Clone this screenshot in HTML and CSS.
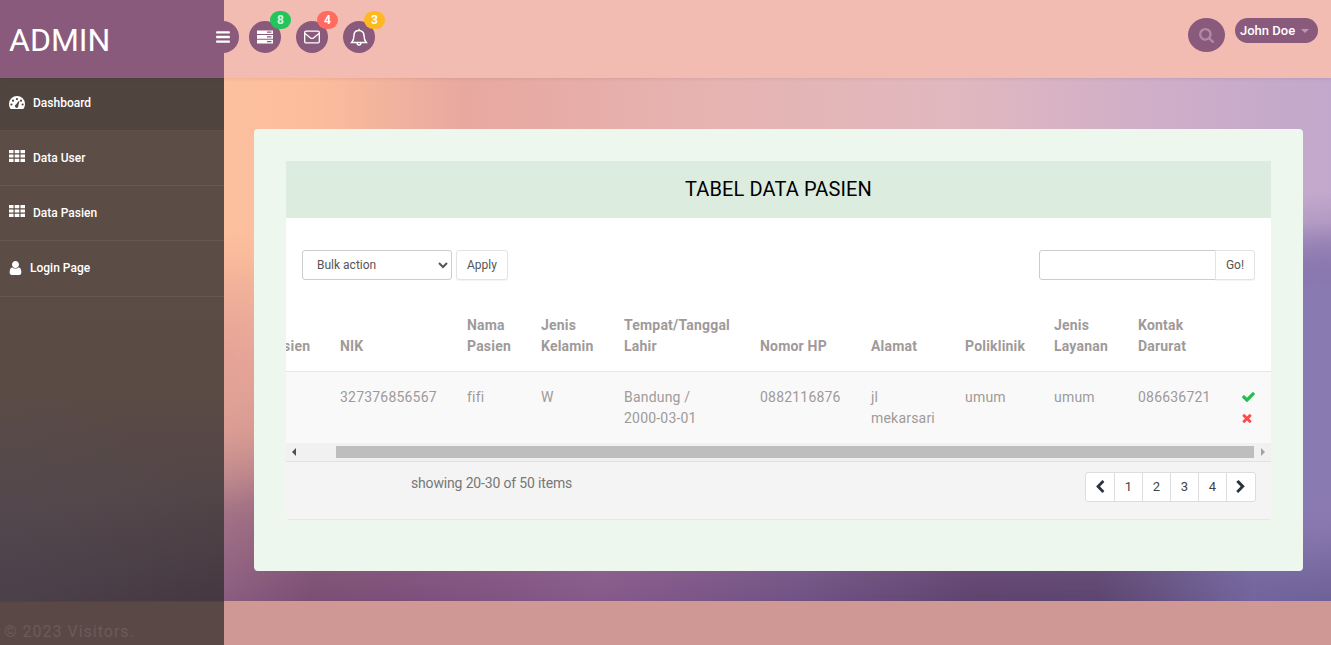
FILE: index.html
```html
<!DOCTYPE html>
<html lang="id">
<head>
<meta charset="utf-8">
<title>Tabel Data Pasien</title>
<link rel="stylesheet" href="styles.css">
</head>
<body>
<div class="app">
  <header class="topbar">
    <div class="brand">ADMIN</div>
    <nav class="quick">
      <button class="round round-menu"><svg class="ic-bars" viewBox="0 0 1536 1792"><path d="M1536 1344v128q0 26-19 45t-45 19H64q-26 0-45-19t-19-45v-128q0-26 19-45t45-19h1408q26 0 45 19t19 45zm0-512v128q0 26-19 45t-45 19H64q-26 0-45-19t-19-45V832q0-26 19-45t45-19h1408q26 0 45 19t19 45zm0-512v128q0 26-19 45t-45 19H64q-26 0-45-19T0 448V320q0-26 19-45t45-19h1408q26 0 45 19t19 45z"/></svg></button>
      <button class="round"><svg class="ic-16" viewBox="0 0 16 14"><path fill-rule="evenodd" d="M0 0.5h16v3.6H0zM10 1.6v1.2h4.500V1.600zM0 5.100h16v3.600H0zM10 6.300v1.200h4.500V6.300zM0 9.700h16v3.800H0zM10 11v1.200h4.500V11z"/></svg><span class="badge badge-green">8</span></button>
      <button class="round"><svg class="ic-16 ic-line" viewBox="0 0 16 14"><rect x="0.700" y="1.200" width="14.600" height="11.600" rx="1.300"/><path d="M1 3.500l5.500 4.400q1.500 1.100 3 0L15 3.500"/></svg><span class="badge badge-red">4</span></button>
      <button class="round"><svg class="ic-bell ic-line" viewBox="0 0 16 16"><path d="M8 2.200c-2.800 0-4.500 2-4.500 4.600 0 3.200-.7 4.600-2 6h13c-1.300-1.400-2-2.800-2-6 0-2.600-1.700-4.600-4.500-4.600zM8 .6v1.600M6.300 13.200c0 1.200.8 2 1.700 2s1.700-.8 1.700-2"/></svg><span class="badge badge-amber">3</span></button>
    </nav>
    <div class="account">
      <button class="round round-search"><svg class="ic-search" viewBox="0 0 1664 1664"><path transform="translate(-64 -128)" d="M1216 832q0-185-131.500-316.500T768 384 451.500 515.500 320 832t131.500 316.500T768 1280t316.500-131.500T1216 832zm512 832q0 52-38 90t-90 38q-54 0-90-38l-343-342q-179 124-399 124-143 0-273.500-55.500t-225-150-150-225T64 832t55.500-273.500 150-225 225-150T768 128t273.500 55.500 225 150 150 225T1472 832q0 220-124 399l343 343q37 37 37 90z"/></svg></button>
      <button class="user-pill">John Doe<span class="caret"></span></button>
    </div>
  </header>

  <aside class="sidebar">
    <ul class="menu">
      <li class="menu-item menu-item-active"><svg class="ic-menu" viewBox="0 0 16 13"><path fill-rule="evenodd" d="M8 0a8 8 0 0 1 8 8c0 1.800-.6 3.500-1.500 4.800-.2.200-.4.200-.6.200H2.100c-.2 0-.4 0-.6-.2C.6 11.500 0 9.800 0 8a8 8 0 0 1 8-8zM8 2a1.100 1.100 0 1 0 0 2.200A1.100 1.100 0 0 0 8 2zM4 3.600a1.100 1.100 0 1 0 0 2.200 1.100 1.100 0 0 0 0-2.200zM12 3.600a1.100 1.100 0 1 0 0 2.200 1.100 1.100 0 0 0 0-2.200zM2.400 7.400a1.100 1.100 0 1 0 0 2.200 1.100 1.100 0 0 0 0-2.200zM13.600 7.400a1.100 1.100 0 1 0 0 2.200 1.100 1.100 0 0 0 0-2.200zM9.700 5L7 8.600a1.700 1.700 0 1 0 2.300 1.100L10.500 5.300z"/></svg>Dashboard</li>
      <li class="menu-item"><svg class="ic-menu" viewBox="0 0 16 12"><path d="M0 0h4.500v3.300H0zM5.700 0h4.600v3.300H5.700zM11.500 0H16v3.300h-4.500zM0 4.400h4.500v3.200H0zM5.700 4.400h4.600v3.200H5.700zM11.500 4.400H16v3.200h-4.500zM0 8.700h4.500V12H0zM5.700 8.700h4.600V12H5.700zM11.500 8.700H16V12h-4.500z"/></svg>Data User</li>
      <li class="menu-item"><svg class="ic-menu" viewBox="0 0 16 12"><path d="M0 0h4.500v3.300H0zM5.700 0h4.600v3.300H5.700zM11.500 0H16v3.300h-4.500zM0 4.400h4.500v3.200H0zM5.700 4.400h4.600v3.200H5.700zM11.500 4.400H16v3.200h-4.500zM0 8.700h4.500V12H0zM5.700 8.700h4.600V12H5.700zM11.500 8.700H16V12h-4.500z"/></svg>Data Pasien</li>
      <li class="menu-item menu-item-user"><svg class="ic-user" viewBox="256 128 1280 1536"><path d="M1536 1399q0 109-62.500 187t-150.500 78H469q-88 0-150.500-78T256 1399q0-85 8.500-160.500t31.500-152 58.500-131 94-89T583 832q131 128 313 128t313-128q76 0 134.500 34.500t94 89 58.500 131 31.500 152 8.500 160.500zm-256-887q0 159-112.500 271.500T896 896 624.500 783.500 512 512t112.500-271.500T896 128t271.500 112.500T1280 512z"/></svg>Login Page</li>
    </ul>
  </aside>

  <main class="content">
    <section class="card">
      <h1 class="card-title">TABEL DATA PASIEN</h1>
      <div class="card-body">
        <div class="toolbar">
          <div class="tool-group">
            <select class="bulk-select"><option>Bulk action</option></select>
            <button class="btn">Apply</button>
          </div>
          <div class="search-group">
            <input class="search-input" type="text">
            <button class="btn btn-go">Go!</button>
          </div>
        </div>
        <div class="table-clip">
          <table class="data-table">
            <colgroup>
              <col class="c-id"><col class="c-nik"><col class="c-nama"><col class="c-jk"><col class="c-ttl"><col class="c-hp"><col class="c-alamat"><col class="c-poli"><col class="c-layanan"><col class="c-kontak"><col class="c-aksi">
            </colgroup>
            <thead>
              <tr>
                <th class="cell-id">ID Pasien</th><th>NIK</th><th>Nama Pasien</th><th>Jenis Kelamin</th><th>Tempat/Tanggal Lahir</th><th>Nomor HP</th><th>Alamat</th><th>Poliklinik</th><th>Jenis Layanan</th><th>Kontak Darurat</th><th></th>
              </tr>
            </thead>
            <tbody>
              <tr>
                <td class="cell-id">1</td><td>327376856567</td><td>fifi</td><td>W</td><td>Bandung / <span class="nowrap">2000-03-01</span></td><td>0882116876</td><td>jl mekarsari</td><td>umum</td><td>umum</td><td>086636721</td>
                <td class="cell-actions">
                  <svg class="ic-check" viewBox="128 320 1543 1200"><path d="M1671 566q0 40-28 68l-724 724-136 136q-28 28-68 28t-68-28l-136-136-362-362q-28-28-28-68t28-68l136-136q28-28 68-28t68 28l294 295 656-657q28-28 68-28t68 28l136 136q28 28 28 68z"/></svg>
                  <svg class="ic-times" viewBox="302 238 1188 1316"><path d="M1490 1322q0 40-28 68l-136 136q-28 28-68 28t-68-28l-294-294-294 294q-28 28-68 28t-68-28l-136-136q-28-28-28-68t28-68l294-294-294-294q-28-28-28-68t28-68l136-136q28-28 68-28t68 28l294 294 294-294q28-28 68-28t68 28l136 136q28 28 28 68t-28 68l-294 294 294 294q28 28 28 68z"/></svg>
                </td>
              </tr>
            </tbody>
          </table>
        </div>
        <div class="scrollbar">
          <span class="arrow arrow-left"></span>
          <span class="thumb"></span>
          <span class="arrow arrow-right"></span>
        </div>
        <div class="table-foot">
          <span class="foot-info">showing 20-30 of 50 items</span>
          <div class="pager">
            <a class="page page-arrow"><svg class="ic-chev" viewBox="0 0 1792 1792"><path d="M1427 301L896 832l531 531q19 19 19 45t-19 45l-166 166q-19 19-45 19t-45-19L429 877q-19-19-19-45t19-45l742-742q19-19 45-19t45 19l166 166q19 19 19 45t-19 45z"/></svg></a>
            <a class="page">1</a><a class="page">2</a><a class="page">3</a><a class="page">4</a>
            <a class="page page-arrow page-last"><svg class="ic-chev" viewBox="0 0 1792 1792"><path d="M1363 877l-742 742q-19 19-45 19t-45-19l-166-166q-19-19-19-45t19-45l531-531-531-531q-19-19-19-45t19-45L576 45q19-19 45-19t45 19l742 742q19 19 19 45t-19 45z" transform="translate(-45 0)"/></svg></a>
          </div>
        </div>
      </div>
    </section>
  </main>

  <div class="side-foot">© 2023 Visitors.</div>
  <footer class="main-foot"></footer>
</div>
</body>
</html>
```
FILE: styles.css
```css
* { box-sizing: border-box; }
html, body { margin: 0; height: 100%; }
body { font-family: Roboto, "Liberation Sans", sans-serif; font-size: 14px; overflow: hidden; }
button { font-family: inherit; border: 0; padding: 0; }

.app {
  display: grid;
  grid-template-columns: 224px minmax(0, 1fr);
  grid-template-rows: 78px 523px 44px;
  height: 645px;
}

/* top bar */
.topbar {
  grid-column: 1 / 3;
  display: flex;
  align-items: flex-start;
  background: #f2bcb3;
  box-shadow: 0 1px 3px rgba(0,0,0,.08);
  position: relative;
  z-index: 2;
}
.brand {
  width: 224px;
  height: 78px;
  padding: 19px 0 0 9px;
  background: #8a5a7c;
  color: #fff;
  font-size: 32px;
  line-height: 42px;
}
.quick { display: flex; gap: 15px; margin: 21px 0 0 -17px; }
.round {
  position: relative;
  width: 32px;
  height: 32px;
  border-radius: 50%;
  background: #8a5a7c;
  display: flex;
  align-items: center;
  justify-content: center;
}
.round-menu { margin-right: -5px; }
.round svg { fill: #fff; }
.ic-bars { width: 14px; height: 16px; }
.ic-16 { width: 16px; height: 16px; }
.ic-bell { width: 18px; height: 18px; }
.round svg.ic-line { fill: none; stroke: #fff; stroke-width: 1.300; }
.badge {
  position: absolute;
  top: -10px;
  left: 21px;
  min-width: 21px;
  height: 18px;
  border-radius: 10px;
  color: #fff;
  font-size: 12px;
  font-weight: 700;
  line-height: 18px;
  text-align: center;
}
.badge-green { background: #22c55a; color: #d8f5e0; }
.badge-red { background: #ff6b5e; }
.badge-amber { background: #ffb81f; }

.account { margin-left: auto; display: flex; gap: 10px; padding: 18px 13px 0 0; align-items: flex-start; }
.round-search { width: 37px; height: 34px; }
.round-search svg.ic-search { width: 15px; height: 15px; fill: #b08ba6; }
.user-pill {
  width: 83px;
  height: 25px;
  padding-left: 5px;
  border-radius: 13px;
  background: #8a5a7c;
  color: #fff;
  font-size: 13px;
  font-weight: 500;
  display: flex;
  align-items: center;
}
.caret {
  margin-left: 6px;
  border-left: 4px solid transparent;
  border-right: 4px solid transparent;
  border-top: 4px solid #b29ab0;
}

/* sidebar */
.sidebar {
  background:
    radial-gradient(ellipse 230px 220px at 0 100%, rgba(105,105,125,.18), rgba(105,105,125,0)),
    linear-gradient(180deg, #5c4d45 0, #5b4b45 60%, #524548 80%, #453740 100%);
}
.menu { list-style: none; margin: 0; padding: 0; }
.menu-item {
  height: 55px;
  display: flex;
  align-items: flex-start;
  padding: 20px 0 0 9px;
  border-bottom: 1px solid #6a5850;
  color: #fff;
  font-size: 12px;
  font-weight: 500;
  line-height: 15px;
}
.menu-item-active { height: 53px; padding-top: 17px; background: #50443f; border-bottom-color: #625047; line-height: 17px; }
.menu-item-user { height: 56px; }
.ic-menu { width: 16px; height: 12px; margin: -1px 8px 0 0; fill: #fff; flex: none; }
.menu-item-active .ic-menu { margin-top: 1px; height: 13px; }
.ic-user { width: 13px; height: 14px; margin: 0 8px 0 0; fill: #fff; flex: none; }

/* content */
.content {
  position: relative;
  padding: 51px 28px 30px 30px;
  background: linear-gradient(90deg, #fdc09e 0, #fcbd9c 8%, #e8a8a0 22%, #e6b4b2 45%, #e1b8bf 66%, #cfaec8 84%, #c2a8cc 100%);
  overflow: hidden;
}
.content::before {
  content: "";
  position: absolute;
  inset: 0;
  background: linear-gradient(90deg, #8a5d80 0, #7a4e74 8%, #7c4f7c 17%, #85598a 34%, #705285 52%, #5e436e 68%, #5c4570 79%, #72659d 93%, #6e6299 100%);
  -webkit-mask-image: linear-gradient(180deg, transparent 35%, rgba(0,0,0,.12) 50%, rgba(0,0,0,.4) 68%, rgba(0,0,0,.8) 84%, #000 100%);
  mask-image: linear-gradient(180deg, transparent 35%, rgba(0,0,0,.12) 50%, rgba(0,0,0,.4) 68%, rgba(0,0,0,.8) 84%, #000 100%);
}
.content::after {
  content: "";
  position: absolute;
  inset: 0;
  background:
    radial-gradient(ellipse 170px 215px at 100% 330px, #8a7ab2 0, #8a7ab2 55%, rgba(138,122,178,0) 100%),
    radial-gradient(ellipse 180px 60px at 100% 205px, #78609a 0, rgba(120,96,154,0) 100%),
    radial-gradient(ellipse 90px 140px at 0 290px, rgba(228,160,150,.85) 0, rgba(228,160,150,0) 100%);
  background-repeat: no-repeat;
  -webkit-mask-image: linear-gradient(180deg, #000 82%, transparent 100%);
  mask-image: linear-gradient(180deg, #000 82%, transparent 100%);
}
.card {
  position: relative;
  z-index: 1;
  height: 442px;
  padding: 32px;
  background: #edf7ee;
  border-radius: 4px;
}
.card-title {
  margin: 0;
  height: 57px;
  background: #dcede0;
  color: #000;
  font-size: 20px;
  font-weight: 400;
  letter-spacing: .12px;
  line-height: 57px;
  text-align: center;
}
.card-body { background: #fff; height: 302px; border-radius: 0 0 3px 3px; overflow: hidden; }
.toolbar { display: flex; justify-content: space-between; padding: 32px 16px 0; height: 82px; }
.tool-group { display: flex; gap: 4px; }
.search-group { display: flex; }
.bulk-select {
  width: 150px;
  height: 30px;
  padding-left: 10px;
  border: 1px solid #ccc;
  border-radius: 3px;
  background: #fff;
  color: #555;
  font: 12px Roboto, sans-serif;
}
.btn {
  height: 30px;
  padding: 0 10px;
  border: 1px solid #e1e4e6;
  border-radius: 3px;
  background: #fff;
  box-shadow: 0 1px 1px rgba(0,0,0,.05);
  color: #555;
  font-size: 12px;
}
.search-input {
  width: 177px;
  height: 30px;
  border: 1px solid #ccc;
  border-radius: 3px 0 0 3px;
  background: #fff;
}
.btn-go { width: 40px; margin-left: -1px; padding: 0; border-radius: 0 3px 3px 0; }

/* table */
.table-clip { overflow: hidden; height: 143px; }
.data-table {
  table-layout: fixed;
  width: 1042px;
  margin-left: -41px;
  border-collapse: collapse;
  color: #9f9a9a;
  line-height: 21px;
  letter-spacing: .2px;
}
.nowrap { white-space: nowrap; }
.c-id { width: 80px; }
.c-nik { width: 127px; }
.c-nama { width: 74px; }
.c-jk { width: 83px; }
.c-ttl { width: 136px; }
.c-hp { width: 111px; }
.c-alamat { width: 94px; }
.c-poli { width: 89px; }
.c-layanan { width: 84px; }
.c-kontak { width: 104px; }
.c-aksi { width: 60px; }
.data-table th {
  padding: 15px 8px 14px 15px;
  text-align: left;
  vertical-align: bottom;
  font-weight: 700;
  border-bottom: 1px solid #e6e6e6;
}
.data-table td { padding: 14.500px 8px 14.500px 15px; vertical-align: top; background: #f9f9f9; }
.data-table td:nth-child(5) { padding-right: 15px; }
.data-table .cell-id { padding-left: 4px; padding-right: 0; white-space: nowrap; }
.cell-actions svg { display: block; }
.ic-check { width: 13px; height: 10px; margin: 5px 0 0; fill: #22c04f; }
.ic-times { width: 10px; height: 10px; margin: 11px 0 0 0; fill: #ff4a4a; }

/* drawn scrollbar */
.scrollbar {
  position: relative;
  display: flex;
  align-items: center;
  height: 19px;
  padding-left: 50px;
  padding-right: 17px;
  background: #f1f1f1;
  border-bottom: 1px solid #e2e2e2;
}
.thumb { flex: 1; height: 12px; background: #bebebe; }
.arrow { position: absolute; top: 5px; border-top: 4px solid transparent; border-bottom: 4px solid transparent; }
.arrow-left { left: 6px; border-right: 4px solid #505050; }
.arrow-right { right: 6px; border-left: 4px solid #a3a3a3; }

.table-foot {
  display: flex;
  justify-content: space-between;
  align-items: flex-start;
  height: 58px;
  padding: 10px 15px 0 125px;
  background: #f4f4f4;
  border-bottom: 1px solid #e4e8e4;
  color: #777;
}
.foot-info { letter-spacing: -.16px; line-height: 23px; }
.pager {
  display: flex;
  height: 30px;
  border: 1px solid #ddd;
  border-radius: 3px;
  background: #fff;
}
.page {
  width: 28px;
  border-left: 1px solid #ddd;
  color: #444;
  font-size: 13px;
  line-height: 28px;
  text-align: center;
}
.page:first-child { border-left: 0; }
.page-last { width: 29px; }
.page-arrow { display: flex; align-items: center; justify-content: center; }
.ic-chev { width: 14px; height: 14px; fill: #2a3440; }

/* footer */
.side-foot {
  padding: 20px 0 0 4px;
  background: #5a4846;
  color: #6a5b59;
  font-size: 16px;
  line-height: 19px;
  letter-spacing: 1px;
  border-top: 1px solid #54423f;
  white-space: nowrap;
  overflow: hidden;
}
.main-foot { background: #cf9895; }
```
